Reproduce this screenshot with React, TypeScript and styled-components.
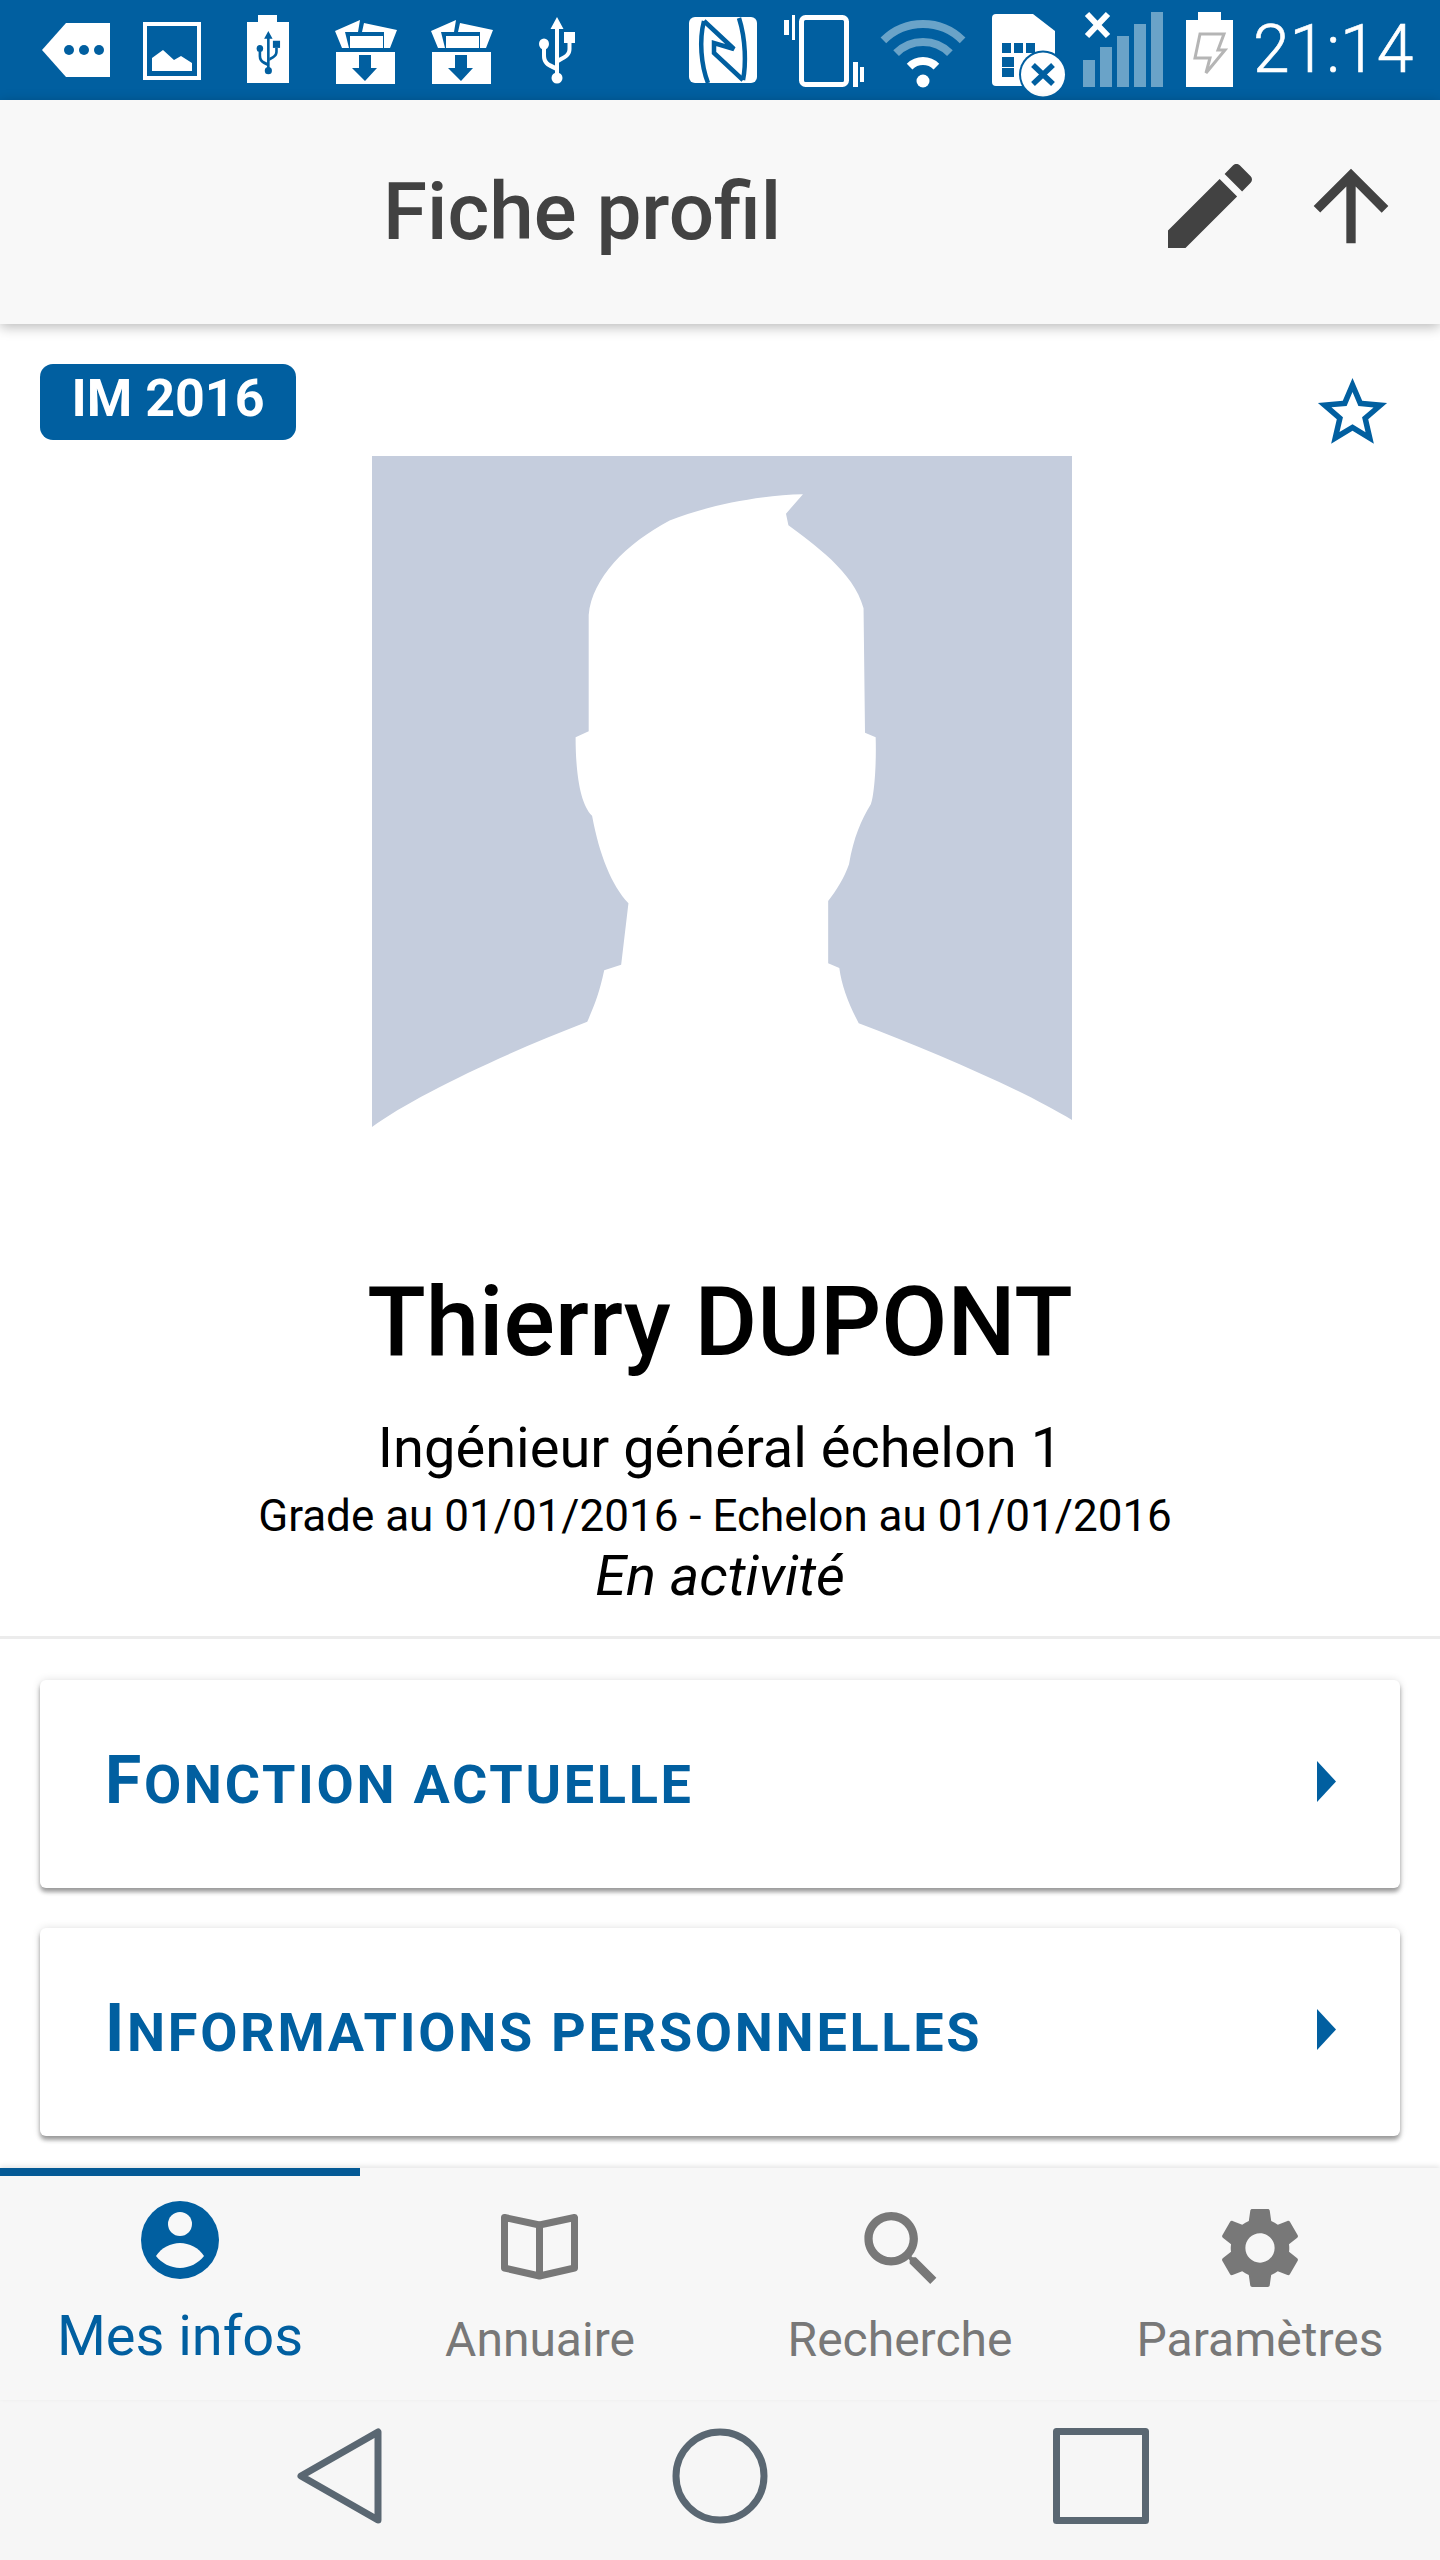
import * as React from "react";
import styled, { createGlobalStyle } from "styled-components";

const BLUE = "#015fa0";
const GREY = "#787878";

const Global = createGlobalStyle`
  html, body {
    margin: 0;
    padding: 0;
    background: #fff;
    font-family: Roboto, "Liberation Sans", sans-serif;
  }
`;

const Screen = styled.div`
  width: 1440px;
  height: 2560px;
  display: flex;
  flex-direction: column;
  overflow: hidden;
`;

const StatusBar = styled.div`
  height: 100px;
  flex: none;
  display: flex;
  align-items: center;
  padding-left: 42px;
  background: ${BLUE};
`;

const StatusIcon = styled.svg<{ $gap?: number }>`
  flex: none;
  height: 100px;
  margin-left: ${(p) => p.$gap || 0}px;
`;

const Clock = styled.div`
  margin-left: 20px;
  color: #fff;
  font-size: 66px;
  font-weight: 300;
  line-height: 100px;
  white-space: nowrap;
  -webkit-text-stroke: 0.6px #fff;
`;

const Header = styled.header`
  position: relative;
  z-index: 2;
  height: 224px;
  flex: none;
  box-sizing: border-box;
  display: flex;
  align-items: center;
  padding: 0 33px 12px 383px;
  background: #f8f8f8;
  box-shadow: 0 3px 12px rgba(0, 0, 0, 0.28);
`;

const Title = styled.h1`
  flex: 1;
  margin: 12px 0 0;
  color: #424242;
  font-size: 80px;
  font-weight: 500;
  line-height: 90px;
`;

const HeaderIcon = styled.svg<{ $gap?: number }>`
  width: 112px;
  height: 112px;
  flex: none;
  margin-left: ${(p) => p.$gap || 0}px;
  fill: #424242;
`;

const Main = styled.main`
  flex: 1;
  min-height: 0;
  padding-top: 40px;
  background: #fff;
  overflow: hidden;
`;

const TopRow = styled.div`
  height: 76px;
  display: flex;
  justify-content: space-between;
  align-items: flex-start;
  padding: 0 46px 0 40px;
`;

const Badge = styled.div`
  width: 256px;
  height: 76px;
  border-radius: 13px;
  background: ${BLUE};
  color: #fff;
  font-size: 52px;
  font-weight: 700;
  line-height: 70px;
  text-align: center;
`;

const Star = styled.svg`
  width: 83px;
  height: 83px;
  margin-top: 7px;
  fill: ${BLUE};
`;

const Portrait = styled.svg`
  display: block;
  width: 700px;
  height: 671px;
  margin: 16px 0 0 372px;
`;

const Identity = styled.section`
  padding-bottom: 28px;
  border-bottom: 3px solid #ececec;
  color: #000;
  text-align: center;
`;

const Name = styled.div`
  margin-top: 139px;
  font-size: 96px;
  font-weight: 500;
  line-height: 112px;
`;

const Rank = styled.div`
  margin-top: 37px;
  font-size: 56px;
  line-height: 66px;
`;

const Dates = styled.div`
  margin-top: 7px;
  padding-right: 10px;
  font-size: 44px;
  line-height: 56px;
`;

const Activity = styled.div`
  font-size: 56px;
  font-style: italic;
  line-height: 64px;
`;

const Cards = styled.div`
  display: flex;
  flex-direction: column;
  gap: 40px;
  padding: 41px 40px 0;
`;

const Card = styled.div`
  height: 208px;
  box-sizing: border-box;
  display: flex;
  align-items: center;
  justify-content: space-between;
  padding: 0 64px 0 65px;
  border-radius: 6px;
  background: #fff;
  box-shadow: 0 4px 4px rgba(0, 0, 0, 0.36), 0 0 8px rgba(0, 0, 0, 0.12);
`;

const CardTitle = styled.div`
  margin-bottom: 3px;
  color: ${BLUE};
  font-size: 54px;
  font-weight: 700;
  letter-spacing: 2.7px;
  line-height: 70px;
  text-transform: uppercase;
  &::first-letter {
    font-size: 66px;
  }
`;

const Chevron = styled.svg`
  width: 19px;
  height: 41px;
  margin-bottom: 5px;
  fill: ${BLUE};
`;

const TabBar = styled.nav`
  position: relative;
  height: 232px;
  flex: none;
  display: grid;
  grid-template-columns: repeat(4, 360px);
  background: #f7f7f7;
  box-shadow: 0 -2px 5px rgba(0, 0, 0, 0.1);
`;

const Tab = styled.div<{ $active?: boolean }>`
  box-sizing: border-box;
  display: flex;
  flex-direction: column;
  align-items: center;
  padding-top: 22px;
  border-top: 8px solid ${(p) => (p.$active ? "#045a96" : "transparent")};
`;

const TabIcon = styled.svg`
  width: 100px;
  height: 100px;
  flex: none;
`;

const TabLabel = styled.div<{ $active?: boolean }>`
  margin-top: ${(p) => (p.$active ? 8 : 12)}px;
  color: ${(p) => (p.$active ? BLUE : GREY)};
  font-size: ${(p) => (p.$active ? 56 : 48)}px;
  line-height: 60px;
  white-space: nowrap;
`;

const SystemNav = styled.div`
  height: 160px;
  flex: none;
  box-sizing: border-box;
  display: flex;
  gap: 285px;
  padding: 28px 0 0 291px;
  background: #f6f6f6;
`;

const SystemIcon = styled.svg`
  width: 96px;
  height: 96px;
  fill: none;
  stroke: #5a6772;
  stroke-width: 7;
  stroke-linejoin: round;
`;

// local box: 36 wide, 66 high
const UsbGlyph: React.FC<{ color: string }> = ({ color }) => (
  <g fill={color} stroke="none">
    <path d="M19 0l6.5 12H21v50h-4V12h-4.5z" />
    <ellipse cx="19" cy="61" rx="5.5" ry="5.5" />
    <ellipse cx="6" cy="27" rx="5" ry="5.5" />
    <rect x="26" y="15" width="11" height="11" />
    <path d="M29.5 26h4v6c0 6-4 9-8 11l-5 3v-5l3-1.5c4-2 6-4 6-8z" />
    <path d="M4 32h4v6c0 5 2 7 5 8.500l6 3v5l-7-3.500c-5-2.500-8-6-8-12z" />
  </g>
);

const ArchiveGlyph = () => (
  <g fill="#fff">
    <path d="M0 11L25 0l-2 12H10l4 16H7z" />
    <path d="M29 3l33 7-7 18h-6l0-16H27z" />
    <rect x="15" y="16" width="33" height="12" />
    <path d="M1 32h59v32H1z" />
    <path d="M24 35h12v13h6L30 61 17 48h7z" fill={BLUE} />
  </g>
);

const StatusIcons = () => (
  <>
    <StatusIcon width="68" viewBox="0 0 68 100">
      <path d="M0 50L24 23h44v54H24z" fill="#fff" />
      <circle cx="27" cy="50" r="5" fill={BLUE} />
      <circle cx="42" cy="50" r="5" fill={BLUE} />
      <circle cx="57" cy="50" r="5" fill={BLUE} />
    </StatusIcon>
    <StatusIcon $gap={33} width="58" viewBox="0 0 58 100">
      <rect x="2" y="24" width="54" height="54" fill="none" stroke="#fff" strokeWidth="4" />
      <path d="M9 58l11-8 11 10 7-4 11 7v8H9z" fill="#fff" />
    </StatusIcon>
    <StatusIcon $gap={46} width="42" viewBox="0 0 42 100">
      <path d="M11 15h19v7h12v61H0V22h11z" fill="#fff" />
      <g transform="translate(9 31) scale(0.65)">
        <UsbGlyph color={BLUE} />
      </g>
    </StatusIcon>
    <StatusIcon $gap={46} width="62" viewBox="0 -20 62 100">
      <ArchiveGlyph />
    </StatusIcon>
    <StatusIcon $gap={34} width="62" viewBox="0 -20 62 100">
      <ArchiveGlyph />
    </StatusIcon>
    <StatusIcon $gap={45} width="38" viewBox="0 -17 38 100">
      <UsbGlyph color="#fff" />
    </StatusIcon>
    <StatusIcon $gap={113} width="68" viewBox="0 0 68 100">
      <rect y="17" width="68" height="66" rx="6" fill="#fff" />
      <g fill="none" stroke={BLUE} strokeWidth="4.5">
        <path d="M15 21l30 28-20-6v10l29 27" />
        <path d="M50 18c7 22 7 47 4 62" />
        <path d="M15 21c-5 19-3 44 4 62" />
      </g>
    </StatusIcon>
    <StatusIcon $gap={27} width="80" viewBox="0 0 80 100">
      <rect x="17.500" y="17.500" width="45" height="67" rx="4" fill="none" stroke="#fff" strokeWidth="5" />
      <rect y="20" width="5" height="15" fill="#fff" />
      <rect x="8" y="15" width="3" height="25" fill="#fff" />
      <rect x="69" y="62" width="5" height="25" fill="#fff" />
      <rect x="76" y="67" width="4" height="15" fill="#fff" />
    </StatusIcon>
    <StatusIcon $gap={15} width="88" viewBox="0 0 88 100">
      <g fill="none" strokeWidth="8">
        <path d="M4.400 40.400a56 56 0 0 1 79.200 0" stroke="#6aa3c8" />
        <path d="M17.100 53.100a38 38 0 0 1 53.800 0" stroke="#6aa3c8" />
        <path d="M30.600 66.600a19 19 0 0 1 26.800 0" stroke="#fff" />
      </g>
      <circle cx="44" cy="81" r="6.500" fill="#fff" />
    </StatusIcon>
    <StatusIcon $gap={25} width="74" viewBox="0 0 74 100">
      <path d="M4 14h37l22 17v51a4 4 0 0 1-4 4H4a4 4 0 0 1-4-4V18a4 4 0 0 1 4-4z" fill="#fff" />
      <path d="M10 43h9v10h-9zM22 43h9v10h-9zM34 43h9v10h-9zM10 57h12v10H10zM10 68h12v9H10z" fill={BLUE} />
      <circle cx="51" cy="74.500" r="24" fill={BLUE} />
      <circle cx="51" cy="74.500" r="22" fill="#fff" />
      <path d="M41 65l20 19M61 65L41 84" stroke={BLUE} strokeWidth="5.500" />
    </StatusIcon>
    <StatusIcon $gap={16} width="82" viewBox="0 0 82 100">
      <g fill="#6aa3c8">
        <rect x="1" y="60" width="12" height="27" />
        <rect x="18" y="47" width="12" height="40" />
        <rect x="35" y="36" width="12" height="51" />
        <rect x="52" y="24" width="12" height="63" />
        <rect x="69" y="12" width="12" height="75" />
      </g>
      <path d="M5 14l21 22M26 14L5 36" stroke="#fff" strokeWidth="6" />
    </StatusIcon>
    <StatusIcon $gap={22} width="47" viewBox="0 0 47 100">
      <path d="M12 12h23v8h12v67H0V20h12z" fill="#fff" />
      <path d="M14 34h24l-6 16h7L20 73l4-15H9z" fill="none" stroke="#b5b5b5" strokeWidth="3" />
    </StatusIcon>
  </>
);

const NavTab: React.FC<{ label: string; active?: boolean; children: React.ReactNode; viewBox: string }> = ({
  label,
  active,
  children,
  viewBox,
}) => (
  <Tab $active={active}>
    <TabIcon viewBox={viewBox}>{children}</TabIcon>
    <TabLabel $active={active}>{label}</TabLabel>
  </Tab>
);

export default function App() {
  return (
    <Screen>
      <Global />
      <StatusBar>
        <StatusIcons />
        <Clock>21:14</Clock>
      </StatusBar>
      <Header>
        <Title>Fiche profil</Title>
        <HeaderIcon viewBox="0 0 24 24">
          <path d="M3 17.250V21h3.750L17.810 9.940l-3.750-3.750L3 17.250zM20.710 7.040c.39-.39.39-1.020 0-1.410l-2.340-2.340c-.39-.39-1.020-.39-1.410 0l-1.830 1.830 3.750 3.750 1.830-1.830z" />
        </HeaderIcon>
        <HeaderIcon $gap={29} viewBox="0 0 24 24">
          <path d="M4 12l1.410 1.410L11 7.830V20h2V7.830l5.580 5.590L20 12l-8-8-8 8z" />
        </HeaderIcon>
      </Header>
      <Main>
        <TopRow>
          <Badge>IM 2016</Badge>
          <Star viewBox="0 0 24 24">
            <path d="M22 9.240l-7.190-.62L12 2 9.190 8.630 2 9.240l5.460 4.730L5.820 21 12 17.270 18.180 21l-1.630-7.030L22 9.240zM12 15.400l-3.760 2.270 1-4.280-3.320-2.880 4.380-.38L12 6.100l1.710 4.040 4.380.38-3.320 2.880 1 4.280L12 15.400z" />
          </Star>
        </TopRow>
        <Portrait viewBox="66 35 1444 1455" preserveAspectRatio="none">
          <rect x="66" y="35" width="1444" height="1455" fill="#c5cddd" />
          <path
            fill="#fff"
            d="M66 1490C150 1425 330 1335 510 1262C525 1225 535 1200 545 1150L580 1138L595 1005C560 965 535 900 520 815C495 790 486 720 486 645L513 632L513 380C520 300 590 225 680 175C750 145 860 120 955 118L920 160L925 185C975 225 1060 285 1080 365L1083 635L1105 645C1107 720 1100 780 1095 790C1075 825 1060 860 1050 920C1040 950 1025 975 1007 1000L1007 1135L1030 1145C1035 1185 1050 1225 1070 1265C1220 1325 1400 1405 1510 1475V1490z"
          />
        </Portrait>
        <Identity>
          <Name>Thierry DUPONT</Name>
          <Rank>Ingénieur général échelon 1</Rank>
          <Dates>Grade au 01/01/2016 - Echelon au 01/01/2016</Dates>
          <Activity>En activité</Activity>
        </Identity>
        <Cards>
          <Card>
            <CardTitle>Fonction actuelle</CardTitle>
            <Chevron viewBox="0 0 19 41">
              <path d="M0 0l19 20.500L0 41z" />
            </Chevron>
          </Card>
          <Card>
            <CardTitle>Informations personnelles</CardTitle>
            <Chevron viewBox="0 0 19 41">
              <path d="M0 0l19 20.500L0 41z" />
            </Chevron>
          </Card>
        </Cards>
      </Main>
      <TabBar>
        <NavTab label="Mes infos" active viewBox="-11 -3 100 100">
          <circle cx="39" cy="39" r="39" fill={BLUE} />
          <circle cx="39" cy="23" r="12" fill="#f8f8f8" />
          <path
            fill="#f8f8f8"
            d="M15 55C20 47 30 42 39 42S58 47 63 55C58 62 48 67 39 67S20 62 15 55z"
          />
        </NavTab>
        <NavTab label="Annuaire" viewBox="-11 -16 100 100">
          <path
            d="M3.500 3.500L38.500 11 73.500 3.500V54L38.500 62 3.500 54zM38.500 11V62"
            fill="none"
            stroke={GREY}
            strokeWidth="7"
            strokeLinejoin="round"
          />
        </NavTab>
        <NavTab label="Recherche" viewBox="-0.5 -0.4 24.300 24.300">
          <path
            fill={GREY}
            d="M15.500 14h-.79l-.28-.27C15.410 12.590 16 11.110 16 9.500 16 5.910 13.090 3 9.500 3S3 5.910 3 9.500 5.910 16 9.500 16c1.610 0 3.090-.59 4.230-1.570l.27.28v.79l5 4.990L20.490 19l-4.990-5zm-6 0C7.010 14 5 11.990 5 9.500S7.010 5 9.500 5 14 7.010 14 9.500 11.990 14 9.500 14z"
          />
        </NavTab>
        <NavTab label="Paramètres" viewBox="-0.3 -0.3 24.600 24.600">
          <path
            fill={GREY}
            d="M19.140 12.940c.04-.3.06-.61.06-.94 0-.32-.02-.64-.07-.94l2.030-1.580c.18-.14.23-.41.12-.61l-1.920-3.320c-.12-.22-.37-.29-.59-.22l-2.390.96c-.5-.38-1.030-.7-1.620-.94L14.400 2.810c-.04-.24-.24-.41-.48-.41h-3.840c-.24 0-.43.17-.47.41L9.250 5.350c-.59.24-1.130.57-1.620.94L5.240 5.330c-.22-.08-.47 0-.59.22L2.740 8.870c-.12.21-.08.47.12.61l2.030 1.580c-.05.3-.09.63-.09.94s.02.64.07.94l-2.030 1.580c-.18.14-.23.41-.12.61l1.920 3.320c.12.22.37.29.59.22l2.390-.96c.5.38 1.030.7 1.620.94l.36 2.540c.05.24.24.41.48.41h3.840c.24 0 .44-.17.47-.41l.36-2.540c.59-.24 1.130-.56 1.620-.94l2.390.96c.22.08.47 0 .59-.22l1.920-3.320c.12-.22.07-.47-.12-.61l-2.010-1.580zM12 15.600c-1.980 0-3.600-1.620-3.600-3.600s1.620-3.600 3.600-3.600 3.600 1.620 3.600 3.600-1.620 3.600-3.600 3.600z"
          />
        </NavTab>
      </TabBar>
      <SystemNav>
        <SystemIcon viewBox="0 0 96 96">
          <path d="M10 48L87 4v88z" />
        </SystemIcon>
        <SystemIcon viewBox="0 0 96 96">
          <circle cx="48" cy="48" r="44" />
        </SystemIcon>
        <SystemIcon viewBox="0 0 96 96">
          <rect x="3.500" y="3.500" width="89" height="89" />
        </SystemIcon>
      </SystemNav>
    </Screen>
  );
}
